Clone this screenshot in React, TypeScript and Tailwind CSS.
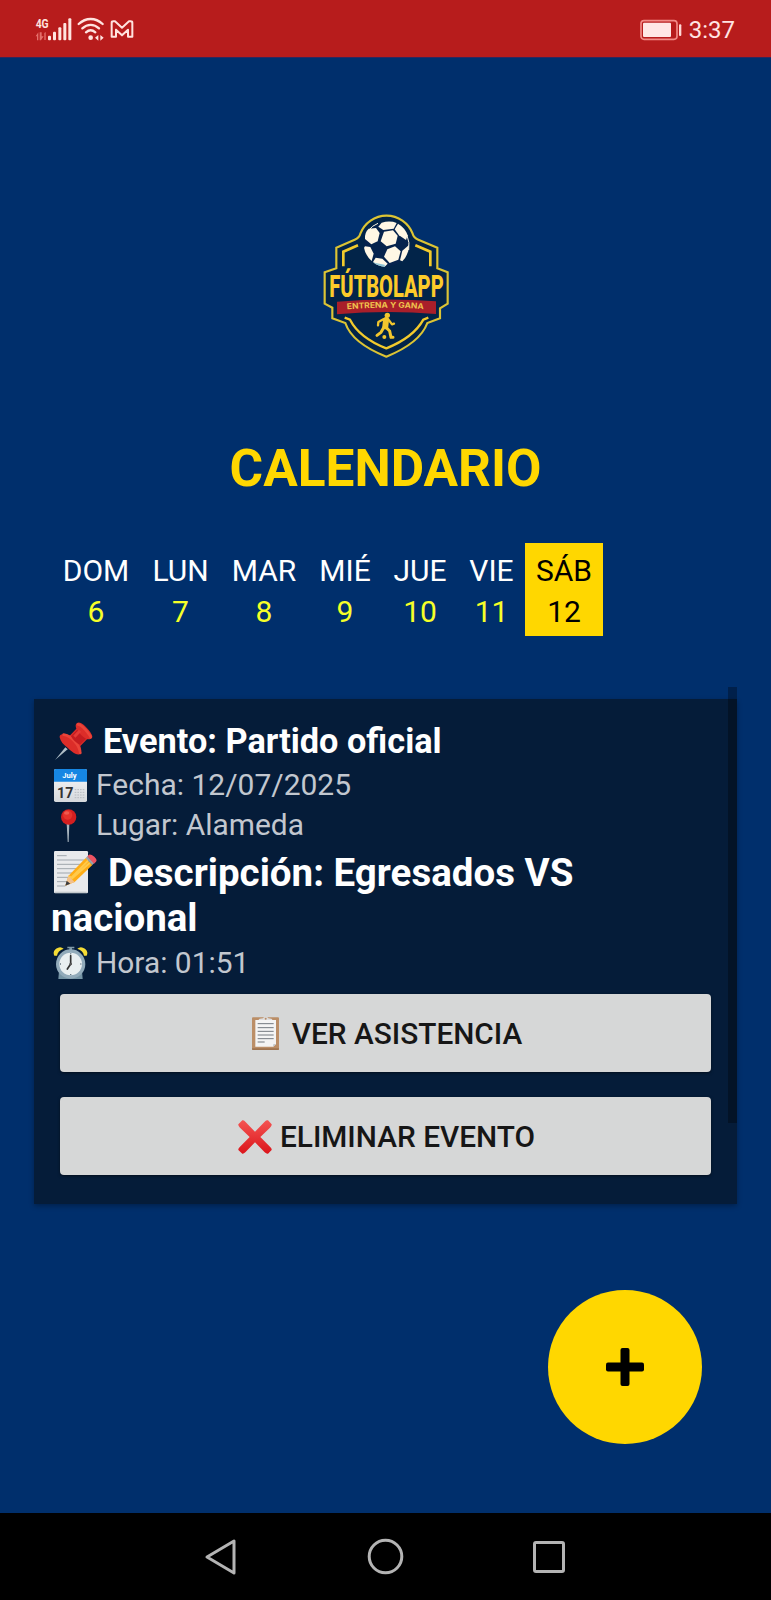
import React from "react";

const days = [
  { name: "DOM", num: "6", cell: "w-[90px]" },
  { name: "LUN", num: "7", cell: "w-[79px]" },
  { name: "MAR", num: "8", cell: "w-[88px]" },
  { name: "MIÉ", num: "9", cell: "w-[74px]" },
  { name: "JUE", num: "10", cell: "w-[76px]" },
  { name: "VIE", num: "11", cell: "w-[67px]" },
  { name: "SÁB", num: "12", cell: "w-[78px]", active: true },
];

function SignalIcons() {
  return (
    <svg width="102" height="30" viewBox="0 0 306 90" fill="none">
      <g fill="#ffe3df">
        <text x="2" y="38" fontFamily="Roboto, sans-serif" fontWeight="700" fontSize="38" textLength="39" lengthAdjust="spacingAndGlyphs">4G</text>
        <rect x="39" y="62" width="9" height="14" rx="3" />
        <rect x="54" y="50" width="9" height="26" rx="3" />
        <rect x="70" y="37" width="9" height="39" rx="3" />
        <rect x="85" y="24" width="9" height="52" rx="3" />
        <rect x="100" y="10" width="9" height="66" rx="3" />
        <circle cx="167" cy="68" r="7" />
        <path d="M190 60v17l-10-8.5zM196 60v17l10-8.5z" />
      </g>
      <g fill="#e5716c">
        <path d="M10 52v24h-4V64H2zM20 52v12h6l-8 12h-4V52zM28 54l4-3v24h-4z" />
      </g>
      <g stroke="#ffe3df" strokeLinecap="round" strokeLinejoin="round">
        <path d="M131 27c22-20 50-20 72 0M142 40c15-14 35-14 50 0M153 52c9-8 19-8 28 0" strokeWidth="7" />
        <path d="M230 65V23q0-4 5-4h5l21 19 21-19h5q5 0 5 4v42h-13V44l-18 17-18-17v21z" strokeWidth="6" />
      </g>
    </svg>
  );
}

function Battery() {
  return (
    <svg width="42" height="22" viewBox="0 0 126 66">
      <rect x="3" y="5" width="108" height="56" rx="9" fill="none" stroke="#f28a86" strokeWidth="5" />
      <rect x="9" y="11" width="84" height="43" rx="3" fill="#ffe7e5" />
      <rect x="117" y="16" width="7" height="35" rx="3" fill="#ffd8d5" />
    </svg>
  );
}

function Logo() {
  return (
    <svg width="150" height="160" viewBox="0 0 450 480" className="overflow-visible">
      <path
        d="M79 128 L134 104 Q148 98 151 86 A84 84 0 0 1 308 86 Q311 98 325 104 L382 128 V190 L413 202 V296 L390 310 V340 L352 354 Q330 414 229 455 Q126 414 106 354 L67 340 V308 L44 296 V202 L79 190 Z"
        fill="#022449" stroke="#dcc434" strokeWidth="6.5"
      />
      <g fill="none" stroke="#f2ca2c" strokeWidth="8">
        <path d="M100 184V140L144 121M361 184V140L316 121" />
        <path d="M104 338 120 344Q148 398 229 430Q310 398 340 344L355 338" strokeWidth="7" />
      </g>
      <circle cx="230" cy="117" r="67" fill="#06234d" />
      <g fill="#fff7e5">
        <path d="M215 53Q240 46 260 54L251 71 220 75 205 65Z" />
        <path d="M176 71 198 69 209 84 203 109 184 118 165 102Q163 83 176 71Z" />
        <path d="M222 80 249 76 263 92 257 116 230 124 212 109Z" />
        <path d="M254 73 264 56Q286 69 293 91L288 105 267 91Z" />
        <path d="M165 124 181 126 191 146 185 168Q166 151 162 128Z" />
        <path d="M232 133 255 124 272 139 265 164 239 174 222 155Z" />
        <path d="M277 137 297 120Q297 148 277 169L270 166Z" />
        <path d="M197 158 217 161 233 176 224 185Q203 184 189 171Z" />
      </g>
      <path d="M174 78Q187 61 204 55M291 91Q300 113 296 135" fill="none" stroke="#fff7e5" strokeWidth="3" />
      <path d="M189 171 197 174 224 179 225 185Q203 184 189 171Z" fill="#8cc3d5" />
      <text x="58" y="275" fontSize="94" textLength="343" lengthAdjust="spacingAndGlyphs" fill="#fccb2a" fontFamily="Roboto, sans-serif" fontWeight="800">FÚTBOLAPP</text>
      <path d="M81 290Q229 277 378 289V327Q229 315 81 328Z" fill="#a91f2a" />
      <path id="mottoCurve" d="M111 313Q229 303 345 313" fill="none" />
      <text fill="#efc34d" fontFamily="Inter, sans-serif" fontWeight="700" fontSize="24">
        <textPath href="#mottoCurve" textLength="230" lengthAdjust="spacingAndGlyphs">ENTRENA Y GANA</textPath>
      </text>
      <g fill="none" stroke="#f2c62d" strokeLinecap="round" strokeLinejoin="round">
        <path d="M228 345 226 364" strokeWidth="18" />
        <path d="M220 343 205 351 204 361M235 343 246 358 252 356" strokeWidth="7" />
        <path d="M222 366 213 382 201 391M228 367 239 378 243 397 249 397" strokeWidth="9" />
      </g>
      <circle cx="232" cy="331" r="8" fill="#f2c62d" />
      <circle cx="223" cy="396" r="6" fill="#f2c62d" />
    </svg>
  );
}

function PushPin() {
  return (
    <svg width="39" height="39" viewBox="0 0 117 117" className="shrink-0">
      <path d="M3 114 34 76 41 82Z" fill="#aebdc6" />
      <path d="M18 49Q13 36 31 36 42 37 47 41L67 20Q62 8 69 3 78-2 95 14 114 33 115 44 114 53 99 52L79 72Q86 91 76 97 64 101 39 76 20 61 18 49Z" fill="#dc2d29" />
      <path d="M29 38Q45 40 61 57T79 93M72 7Q81 8 94 23T110 45" fill="none" stroke="#ea4439" strokeWidth="8" strokeLinecap="round" />
      <path d="M51 43 70 23Q79 40 96 50L78 68Q61 61 51 43Z" fill="#c41c20" />
      <path d="m61 44 17-18" stroke="#e33a36" strokeWidth="9" />
    </svg>
  );
}

function CalendarIcon() {
  return (
    <svg width="33" height="33" viewBox="0 0 99 99" className="shrink-0">
      <defs>
        <linearGradient id="calendarPage" x1="0" y1="0" x2="0" y2="1">
          <stop offset="0" stopColor="#fafafa" /><stop offset="1" stopColor="#d5d8dc" />
        </linearGradient>
      </defs>
      <rect width="99" height="99" rx="5" fill="url(#calendarPage)" />
      <path d="M0 38V5Q0 0 5 0H94Q99 0 99 5V38Z" fill="#1686e3" />
      <text x="25" y="26" fill="#fff" fontFamily="Roboto, sans-serif" fontWeight="700" fontSize="22" textLength="43" lengthAdjust="spacingAndGlyphs">July</text>
      <text x="9" y="87" fill="#333" fontFamily="Roboto, sans-serif" fontWeight="700" fontSize="43" textLength="49" lengthAdjust="spacingAndGlyphs">17</text>
      <g stroke="#b7bbc0" strokeWidth="3" strokeDasharray="5 3">
        <path d="M62 62H93M62 70H93M62 78H93M62 86H93" />
      </g>
    </svg>
  );
}

function RoundPin() {
  return (
    <svg width="33" height="33" viewBox="0 0 99 99" className="shrink-0">
      <path d="M44 43H52L50 99H47Z" fill="#a7b4be" />
      <circle cx="50" cy="24" r="23" fill="#d41f20" />
      <circle cx="47" cy="18" r="14" fill="#e5332c" />
      <ellipse cx="44" cy="12" rx="8" ry="5" fill="#f05a4e" />
    </svg>
  );
}

function MemoIcon() {
  return (
    <svg width="43" height="43" viewBox="0 0 129 129" className="shrink-0">
      <rect width="102" height="127" rx="4" fill="#e9eaec" />
      <path d="M3 122H98V126H3Z" fill="#c3c8cc" />
      <path d="M9 14H38M9 27H91M9 40H91M9 53H75M9 66H66M9 79H56M9 92H42M9 105H34" stroke="#9199a0" strokeWidth="2.5" />
      <path d="m34 104 9-29L95 21 115 42 62 93Z" fill="#ffad16" />
      <path d="m43 75 9 5L103 28M52 84 108 35" stroke="#ffca4b" strokeWidth="6" fill="none" />
      <path d="m95 21 6-6 20 21-6 6Z" fill="#9ba3aa" />
      <path d="m100 16 5-5Q111 9 121 17 131 27 126 32L120 38Z" fill="#ed5362" />
      <path d="m34 104 9-29 19 18Z" fill="#f2c18e" />
      <path d="m34 104 4-15 11 9Z" fill="#3c3c3e" />
    </svg>
  );
}

function ClockIcon() {
  return (
    <svg width="35" height="34" viewBox="0 0 105 102" className="shrink-0">
      <path d="M4 29Q-2 16 9 8 22-1 32 8Q14 14 12 29ZM101 29Q107 16 96 8 83-1 73 8Q91 14 93 29Z" fill="#f5dc35" />
      <path d="M43 2H64V7H57V15H49V7H43Z" fill="#7f99a9" />
      <path d="M18 75 16 99H89L87 75Z" fill="#7594a5" />
      <circle cx="53" cy="54" r="44" fill="#91aaba" />
      <circle cx="53" cy="54" r="34" fill="#e9eff1" />
      <path d="M53 54V29M53 54 43 69" stroke="#333" strokeWidth="5" strokeLinecap="round" />
      <circle cx="53" cy="54" r="4" fill="#555" />
      <path d="M53 22V25M53 84V87M21 54H24M82 54H85" stroke="#657783" strokeWidth="4" />
    </svg>
  );
}

function ClipboardIcon() {
  return (
    <svg width="27" height="33" viewBox="0 0 81 99" className="shrink-0">
      <rect y="1" width="81" height="98" rx="3" fill="#bb8e67" />
      <path d="M0 94H81V96Q81 99 78 99H3Q0 99 0 96Z" fill="#9f7450" />
      <path d="M10 9H72V82L64 89H10Z" fill="#f4f4f4" />
      <path d="M20 9Q20 4 33 4 34 0 41 0T49 4Q61 4 61 9Z" fill="#dedfe0" />
      <circle cx="41" cy="5" r="3" fill="#b78a65" />
      <path d="M17 20H65M17 32H65M17 43H65M17 54H65M17 65H65M17 75H38" stroke="#747a80" strokeWidth="3" />
      <path d="M64 89V82H72Z" fill="#b7bdc1" />
    </svg>
  );
}

function CrossIcon() {
  return (
    <svg width="34" height="34" viewBox="0 0 102 102" className="shrink-0">
      <defs>
        <linearGradient id="crossRed" x1="0" y1="0" x2="0" y2="1">
          <stop stopColor="#f45452" /><stop offset="1" stopColor="#db151b" />
        </linearGradient>
      </defs>
      <path d="M1 13 13 1Q17 0 22 5L51 35 80 5Q85 0 90 1L101 13Q102 17 96 23L67 51 96 80Q102 86 101 90L90 101Q85 102 80 97L51 67 22 97Q17 102 13 101L1 90Q0 86 6 80L35 51 6 23Q0 17 1 13Z" fill="url(#crossRed)" />
    </svg>
  );
}

export default function App() {
  return (
    <div className="flex h-[1600px] w-[771px] flex-col overflow-hidden bg-[#002f6c] font-['Roboto',sans-serif]">
      <header className="flex h-[58px] shrink-0 items-center justify-between border-b border-[#31265c] bg-[#b71c1c] pl-[35px] pr-[36px] pt-[2px]">
        <SignalIcons />
        <div className="flex items-center gap-[7px]">
          <Battery />
          <span className="text-[24px] leading-[30px] text-[#ffe4e2]">3:37</span>
        </div>
      </header>

      <main className="flex h-[1455px] shrink-0 flex-col">
        <div className="ml-[310px] mt-[147px] h-[160px]">
          <Logo />
        </div>
        <h1 className="mt-[73px] text-center text-[51.4px] font-bold leading-[62px] text-[#ffd700]">CALENDARIO</h1>

        <div className="ml-[51px] mt-[43px] flex h-[93px] text-[30px] leading-[41px]">
          {days.map((d) => (
            <div
              key={d.name}
              className={`${d.cell} flex shrink-0 flex-col items-center pt-[7px] ${d.active ? "bg-[#ffd700] text-black" : "text-white"}`}
            >
              <span>{d.name}</span>
              <span className={d.active ? "text-black" : "text-[#f6ff28]"}>{d.num}</span>
            </div>
          ))}
        </div>

        <section className="relative ml-[34px] mt-[63px] h-[505px] w-[703px] bg-[#051c39] pl-[18px] pt-[18px] shadow-[0_2px_5px_rgba(0,0,0,0.3)]">
          <div className="flex h-[48px] items-center">
            <div className="flex w-[51px] pl-[2px]"><PushPin /></div>
            <h2 className="whitespace-nowrap text-[34.3px] font-bold leading-[48px] text-white">Evento: Partido oficial</h2>
          </div>
          <div className="flex h-[40px] items-center text-[30px] leading-[40px] text-[#c2c7cf]">
            <div className="flex w-[44px] pl-[2px]"><CalendarIcon /></div>
            <p>Fecha: 12/07/2025</p>
          </div>
          <div className="flex h-[40px] items-center text-[29.9px] leading-[40px] text-[#c2c7cf]">
            <div className="flex w-[44px]"><RoundPin /></div>
            <p>Lugar: Alameda</p>
          </div>
          <div className="mt-[5px] text-[38.5px] font-bold leading-[45px] text-white">
            <div className="flex h-[45px] items-center">
              <div className="flex w-[56px] pl-[2px]"><MemoIcon /></div>
              <span className="whitespace-nowrap">Descripción: Egresados VS</span>
            </div>
            <div className="-ml-px">nacional</div>
          </div>
          <div className="mt-[3px] flex h-[40px] items-center text-[29.9px] leading-[40px] text-[#c2c7cf]">
            <div className="flex w-[44px] pl-px"><ClockIcon /></div>
            <p>Hora: 01:51</p>
          </div>
          <div className="ml-[8px] mt-[11px] flex w-[651px] flex-col gap-[25px] text-[29.8px] font-medium leading-[40px] text-[#161616]">
            <button className="flex h-[78px] items-center justify-center gap-[13px] rounded-[4px] bg-[#d6d7d7] pl-[3px] pt-px shadow-[0_1px_3px_rgba(0,0,0,0.5)]">
              <ClipboardIcon /><span>VER ASISTENCIA</span>
            </button>
            <button className="flex h-[78px] items-center justify-center gap-[8px] rounded-[4px] bg-[#d6d7d7] pl-[2px] pt-px shadow-[0_1px_3px_rgba(0,0,0,0.5)]">
              <CrossIcon /><span>ELIMINAR EVENTO</span>
            </button>
          </div>
          <div className="absolute right-0 top-[-12px] h-[436px] w-[9px] bg-black/30" />
        </section>

        <button className="ml-[548px] mt-[86px] flex size-[154px] shrink-0 items-center justify-center rounded-full bg-[#ffd700]">
          <svg width="38" height="38" viewBox="0 0 38 38">
            <rect x="14.5" width="9" height="38" rx="2" /><rect y="14.5" width="38" height="9" rx="2" />
          </svg>
        </button>
      </main>

      <nav className="flex h-[87px] shrink-0 items-center bg-black pl-[204px]">
        <svg width="32" height="38" viewBox="0 0 32 38" fill="none" stroke="#b4b4b4" strokeWidth="3" strokeLinejoin="round">
          <path d="M30 3V35L3 19Z" />
        </svg>
        <svg className="ml-[131px]" width="37" height="37" viewBox="0 0 37 37" fill="none" stroke="#b4b4b4" strokeWidth="3">
          <circle cx="18.5" cy="18.5" r="16.3" />
        </svg>
        <div className="ml-[129px] size-[32px] rounded-[3px] border-3 border-[#b4b4b4]" />
      </nav>
    </div>
  );
}
